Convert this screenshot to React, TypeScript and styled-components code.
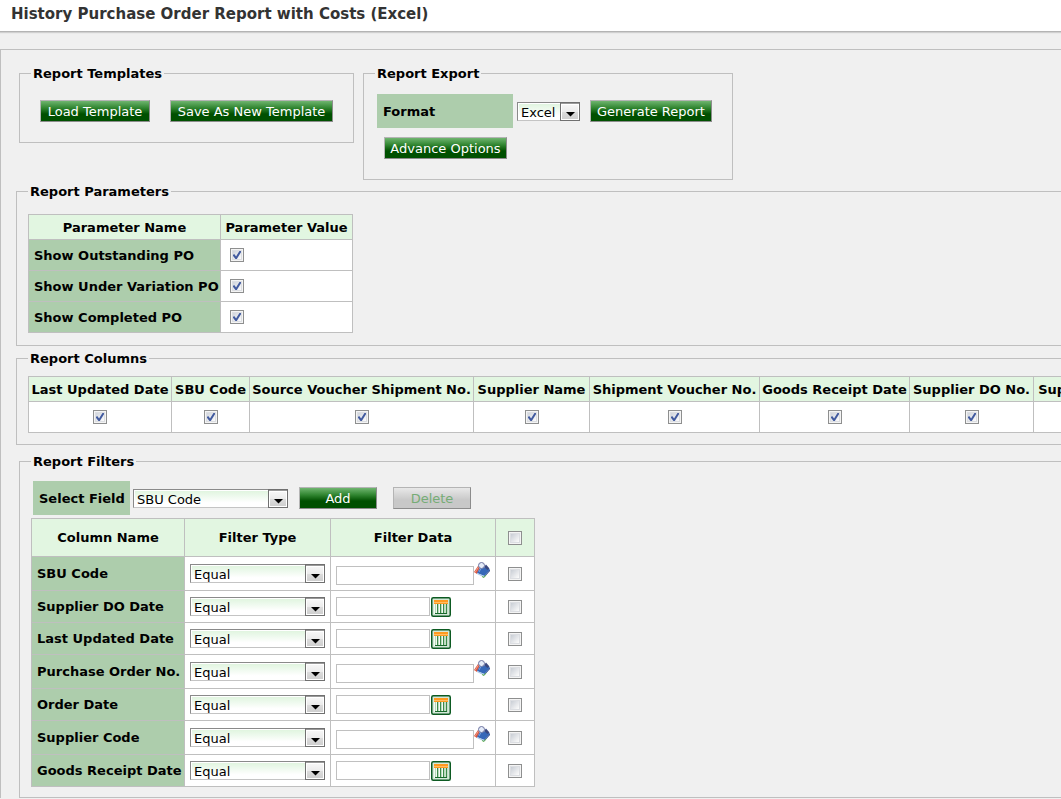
import React, { useState } from "react";
import styled, { createGlobalStyle, css } from "styled-components";

const LINE = "#bfbfbf";
const LABEL_GREEN = "#adcdac";
const HEAD_GREEN = "#e2f6e1";

const TICK =
  "url(\"data:image/svg+xml,%3Csvg xmlns='http://www.w3.org/2000/svg' width='10' height='10' viewBox='0 0 10 10'%3E%3Cpath d='M1.4 4.6 L4.1 8.2 L8.6 1' fill='none' stroke='%23415a9f' stroke-width='2'/%3E%3C/svg%3E\")";

const GlobalStyle = createGlobalStyle`
  * { box-sizing: border-box; }
  body {
    margin: 0;
    background: #f0f0f0;
    color: #000;
    font: 13px/16px Verdana, "DejaVu Sans", sans-serif;
  }
  input, select, button { font: inherit; margin: 0; }
`;

const Page = styled.div`
  overflow: hidden;
  white-space: nowrap;
`;

const Header = styled.header`
  background: #fff;
  border-bottom: 1px solid #b4b4b4;
  box-shadow: 0 1px 1px #d0d0d0;
  padding: 4px 11px 7px;
`;

const Title = styled.h1`
  margin: 0;
  font-size: 15px;
  line-height: 20px;
  color: #333;
`;

const Panel = styled.main`
  margin-top: 17px;
  width: max-content;
  min-width: 100%;
  border: 1px solid ${LINE};
  border-bottom: 0;
  padding: 14px 15px 0;
`;

const TopRow = styled.div`
  display: flex;
  align-items: flex-start;
  gap: 9px;
  padding-left: 3px;
`;

const Group = styled.fieldset<{ $pad: string; $top?: number; $indent?: boolean; $width?: number }>`
  margin: ${(p) => p.$top ?? 0}px 0 0 ${(p) => (p.$indent ? 3 : 0)}px;
  padding: ${(p) => p.$pad};
  border: 1px solid ${LINE};
  ${(p) => p.$width && `width: ${p.$width}px;`}
`;

const Legend = styled.legend<{ $start?: number }>`
  padding: 2px 2px 0;
  margin-left: ${(p) => p.$start ?? 0}px;
  font-weight: bold;
`;

const Line = styled.div<{ $gap: number; $indent?: number }>`
  display: flex;
  align-items: center;
  gap: ${(p) => p.$gap}px;
  padding-left: ${(p) => p.$indent ?? 0}px;
`;

const Button = styled.button<{ $width: number }>`
  width: ${(p) => p.$width}px;
  height: 22px;
  padding: 2px 0 0;
  border: 1px solid;
  border-color: #b4b4b4 #8c8c8c #8c8c8c #b4b4b4;
  background: linear-gradient(#6fb56f 0%, #308530 35%, #005000 65%, #005000 100%);
  color: #fff;
  line-height: 18px;
  text-align: center;
  white-space: nowrap;
  &:disabled {
    color: #76ac76;
    background: linear-gradient(#e8e8e8, #c8c8c8 60%);
  }
`;

const FieldLabel = styled.label<{ $width: number }>`
  width: ${(p) => p.$width}px;
  padding: 10px 6px 8px;
  background: ${LABEL_GREEN};
  font-weight: bold;
`;

const SelectBox = styled.span<{ $width: number }>`
  display: block;
  position: relative;
  width: ${(p) => p.$width}px;
  height: 19px;
`;

const NativeSelect = styled.select`
  appearance: none;
  display: block;
  width: 100%;
  height: 19px;
  padding: 2px 20px 0 3px;
  border: 1px solid;
  border-color: #8a8a8a #a8a8a8 #c4c4c4 #8a8a8a;
  border-radius: 0;
  outline: 0;
  background: linear-gradient(#def4dd, #fff 75%);
  box-shadow: inset 0 0 0 1px #fff;
  color: #000;
  line-height: 15px;
`;

const ArrowBox = styled.svg`
  position: absolute;
  top: 0;
  right: 0;
  pointer-events: none;
`;

const Check = styled.input`
  appearance: none;
  display: block;
  width: 14px;
  height: 14px;
  border: 1px solid #8e8f8f;
  background: linear-gradient(135deg, #bcc2cb, #fafafa 80%);
  box-shadow: inset 0 0 0 1px #f4f4f4, inset 0 0 0 2px #dcdee2;
  &:checked {
    background: ${TICK} center / 10px 10px no-repeat, linear-gradient(135deg, #c4cad4, #fafafa 80%);
  }
`;

const Table = styled.table`
  border-collapse: collapse;
  table-layout: fixed;
  background: #fff;
  width: 1px;
`;

const Cell = css`
  border: 1px solid ${LINE};
  padding: 0;
`;

const HeadCell = styled.th`
  ${Cell}
  padding-top: 1px;
  background: ${HEAD_GREEN};
  text-align: center;
`;

const NameCell = styled.th`
  ${Cell}
  padding-top: 1px;
  padding-left: 5px;
  background: ${LABEL_GREEN};
  text-align: left;
`;

const DataCell = styled.td<{ $pad?: number }>`
  ${Cell}
  padding-left: ${(p) => p.$pad ?? 0}px;
`;

const Row = styled.tr<{ $height: number }>`
  height: ${(p) => p.$height}px;
`;

const Centered = styled.div`
  display: flex;
  justify-content: center;
`;

const DataField = styled.div<{ $lookup: boolean }>`
  display: flex;
  align-items: ${(p) => (p.$lookup ? "flex-start" : "center")};
  gap: ${(p) => (p.$lookup ? 0 : 1)}px;
`;

const TextBox = styled.input<{ $lookup: boolean }>`
  width: ${(p) => (p.$lookup ? 138 : 94)}px;
  height: 19px;
  margin-top: ${(p) => (p.$lookup ? 4 : 0)}px;
  padding: 0 3px;
  border: 1px solid #c0c0c0;
  background: #fff;
  outline: 0;
`;

const IconButton = styled.button`
  display: block;
  padding: 0;
  border: 0;
  background: none;
  line-height: 0;
`;

function Select(props: { width: number; label?: string; id?: string; value: string }) {
  return (
    <SelectBox $width={props.width}>
      <NativeSelect id={props.id} aria-label={props.label} defaultValue={props.value}>
        <option>{props.value}</option>
      </NativeSelect>
      <ArrowBox width="20" height="19" viewBox="0 0 20 19" aria-hidden="true">
        <defs>
          <linearGradient id="face" x1="0" y1="0" x2="0" y2="1">
            <stop offset="0" stopColor="#f6f6f6" />
            <stop offset="0.5" stopColor="#ebebeb" />
            <stop offset="0.5" stopColor="#dcdcdc" />
            <stop offset="1" stopColor="#cfcfcf" />
          </linearGradient>
        </defs>
        <rect x="0.5" y="0.5" width="19" height="18" fill="#fff" stroke="#707070" />
        <path d="M1 1.5H19" stroke="#9a9a9a" />
        <rect x="2" y="3" width="16" height="14" fill="url(#face)" />
        <path d="M6 10H15L10.5 14.5Z" fill="#000" />
      </ArrowBox>
    </SelectBox>
  );
}

function CheckBox({ label, on = false }: { label: string; on?: boolean }) {
  const [checked, setChecked] = useState(on);
  return (
    <Check
      type="checkbox"
      aria-label={label}
      checked={checked}
      onChange={(e) => setChecked(e.target.checked)}
    />
  );
}

function CalendarIcon() {
  return (
    <svg width="20" height="20" viewBox="0 0 20 20" aria-hidden="true">
      <rect x="0.75" y="0.75" width="18.5" height="18.5" rx="1.5" fill="#d3e8d8" stroke="#0d5a22" strokeWidth="1.5" />
      <rect x="3" y="7" width="14" height="10" fill="#f4faf4" />
      <rect x="3" y="3" width="14" height="4" fill="#ff9a1f" />
      <path d="M3 5.5H17" stroke="#ffbd63" />
      <path d="M4.500 7V17" stroke="#b5d8b9" />
      <path d="M6.500 7V17M9.500 7V17M12.500 7V17" stroke="#3c8a49" />
      <path d="M15.500 7V17" stroke="#3c8a49" strokeWidth="1.500" />
      <path d="M7.500 7V17M10.500 7V17M13.500 7V17" stroke="#b9d9bd" />
      <path d="M4 16.500H16" stroke="#17692b" />
    </svg>
  );
}

function LookupIcon() {
  return (
    <svg width="16" height="16" viewBox="0 0 16 16" aria-hidden="true">
      <path d="M0 10L4 4L6 5L3 12Z" fill="#d9553f" />
      <path d="M1 10.500L4.500 5" stroke="#f2b3a0" strokeWidth="0.8" />
      <path d="M3 11L7 4L16 7.500L10.500 14Z" fill="#3668b8" />
      <path d="M3 11L10.500 14L10 15.500L3 12Z" fill="#a9c7e8" />
      <path d="M10.500 14L16 7.500V9L10 15.500Z" fill="#1f3f86" />
      <path d="M8 14.500L10 15.500L12 13" stroke="#5fae4a" fill="none" />
      <path d="M12 2.500L15.500 6.500L13.500 8L10 5Z" fill="#39477f" />
      <circle cx="7.500" cy="3.500" r="3" fill="#e4ebf8" stroke="#6c739f" />
      <path d="M5 10L7 6.500" stroke="#7ba3dd" />
    </svg>
  );
}

const PARAMETERS = ["Show Outstanding PO", "Show Under Variation PO", "Show Completed PO"];

const COLUMNS: [string, number][] = [
  ["Last Updated Date", 143],
  ["SBU Code", 78],
  ["Source Voucher Shipment No.", 224],
  ["Supplier Name", 116],
  ["Shipment Voucher No.", 170],
  ["Goods Receipt Date", 150],
  ["Supplier DO No.", 124],
  ["Supplier Code", 112],
];

const FILTERS: [string, "lookup" | "date"][] = [
  ["SBU Code", "lookup"],
  ["Supplier DO Date", "date"],
  ["Last Updated Date", "date"],
  ["Purchase Order No.", "lookup"],
  ["Order Date", "date"],
  ["Supplier Code", "lookup"],
  ["Goods Receipt Date", "date"],
];

function Cols({ widths }: { widths: number[] }) {
  return (
    <colgroup>
      {widths.map((w, i) => (
        <col key={i} width={w} />
      ))}
    </colgroup>
  );
}

const FormatLine = styled(Line)`
  margin-bottom: 9px;
`;

const Spaced = styled.div<{ $left: number }>`
  margin-left: ${(p) => p.$left}px;
  display: flex;
`;

const FilterLine = styled(Line)`
  margin-bottom: 3px;
`;

export default function App() {
  return (
    <Page>
      <GlobalStyle />
      <Header>
        <Title>History Purchase Order Report with Costs (Excel)</Title>
      </Header>
      <Panel>
        <TopRow>
          <Group $pad="18px 20px 20px" $width={335}>
            <Legend $start={-9}>Report Templates</Legend>
            <Line $gap={20}>
              <Button type="button" $width={110}>Load Template</Button>
              <Button type="button" $width={163}>Save As New Template</Button>
            </Line>
          </Group>
          <Group $pad="12px 20px 20px 13px" $width={370}>
            <Legend $start={-2}>Report Export</Legend>
            <FormatLine $gap={4}>
              <FieldLabel htmlFor="format" $width={136}>Format</FieldLabel>
              <Select id="format" width={63} value="Excel" />
              <Spaced $left={6}>
                <Button type="button" $width={122}>Generate Report</Button>
              </Spaced>
            </FormatLine>
            <Line $gap={0} $indent={7}>
              <Button type="button" $width={123}>Advance Options</Button>
            </Line>
          </Group>
        </TopRow>

        <Group $pad="14px 11px 12px" $top={2}>
          <Legend>Report Parameters</Legend>
          <Table>
            <Cols widths={[192, 132]} />
            <thead>
              <Row $height={25}>
                <HeadCell scope="col">Parameter Name</HeadCell>
                <HeadCell scope="col">Parameter Value</HeadCell>
              </Row>
            </thead>
            <tbody>
              {PARAMETERS.map((name) => (
                <Row key={name} $height={31}>
                  <NameCell scope="row">{name}</NameCell>
                  <DataCell $pad={9}>
                    <CheckBox label={name} on />
                  </DataCell>
                </Row>
              ))}
            </tbody>
          </Table>
        </Group>

        <Group $pad="9px 11px 11px" $top={3}>
          <Legend>Report Columns</Legend>
          <Table>
            <Cols widths={COLUMNS.map((c) => c[1])} />
            <thead>
              <Row $height={25}>
                {COLUMNS.map(([name]) => (
                  <HeadCell key={name} scope="col">{name}</HeadCell>
                ))}
              </Row>
            </thead>
            <tbody>
              <Row $height={31}>
                {COLUMNS.map(([name]) => (
                  <DataCell key={name}>
                    <Centered>
                      <CheckBox label={name} on />
                    </Centered>
                  </DataCell>
                ))}
              </Row>
            </tbody>
          </Table>
        </Group>

        <Group $pad="11px 11px 10px" $top={7} $indent>
          <Legend>Report Filters</Legend>
          <FilterLine $gap={3} $indent={2}>
            <FieldLabel htmlFor="field" $width={97}>Select Field</FieldLabel>
            <Select id="field" width={155} value="SBU Code" />
            <Spaced $left={8}>
              <Button type="button" $width={78}>Add</Button>
            </Spaced>
            <Spaced $left={13}>
              <Button type="button" $width={78} disabled>Delete</Button>
            </Spaced>
          </FilterLine>
          <Table>
            <Cols widths={[153, 146, 165, 39]} />
            <thead>
              <Row $height={38}>
                <HeadCell scope="col">Column Name</HeadCell>
                <HeadCell scope="col">Filter Type</HeadCell>
                <HeadCell scope="col">Filter Data</HeadCell>
                <HeadCell scope="col">
                  <Centered>
                    <CheckBox label="Select all filters" />
                  </Centered>
                </HeadCell>
              </Row>
            </thead>
            <tbody>
              {FILTERS.map(([name, kind]) => {
                const lookup = kind === "lookup";
                return (
                  <Row key={name} $height={lookup ? 34 : 32}>
                    <NameCell scope="row">{name}</NameCell>
                    <DataCell $pad={5}>
                      <Select width={135} label={`${name} filter type`} value="Equal" />
                    </DataCell>
                    <DataCell $pad={5}>
                      <DataField $lookup={lookup}>
                        <TextBox type="text" aria-label={`${name} filter data`} $lookup={lookup} />
                        <IconButton type="button" aria-label={lookup ? `Look up ${name}` : `Pick ${name}`}>
                          {lookup ? <LookupIcon /> : <CalendarIcon />}
                        </IconButton>
                      </DataField>
                    </DataCell>
                    <DataCell>
                      <Centered>
                        <CheckBox label={`Select ${name}`} />
                      </Centered>
                    </DataCell>
                  </Row>
                );
              })}
            </tbody>
          </Table>
        </Group>
      </Panel>
    </Page>
  );
}
